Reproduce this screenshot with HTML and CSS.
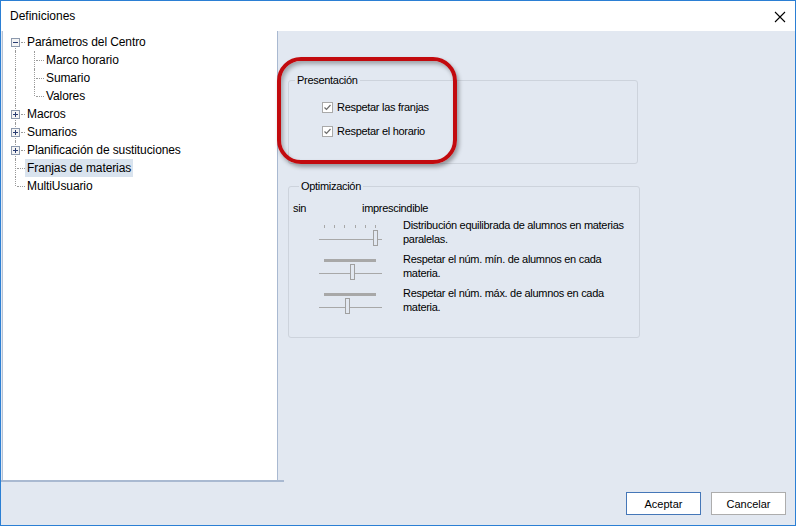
FILE: index.html
```html
<!DOCTYPE html>
<html lang="es">
<head>
    <meta charset="UTF-8">
    <title>Definiciones</title>
    <link rel="stylesheet" href="styles.css">
</head>
<body>
    <div class="window">
        <div class="titlebar">
            <span class="title">Definiciones</span>
            <svg class="close" width="12" height="12" viewBox="0 0 12 12">
                <path d="M1 1 L11 11 M11 1 L1 11" stroke="#000" stroke-width="1.1" fill="none"/>
            </svg>
        </div>

        <div class="main">
            <div class="tree-wrap">
                <ul class="tree">
                    <li class="row">
                        <span class="g first box"><svg width="9" height="9"><rect x=".5" y=".5" width="8" height="8" class="bx"/><path d="M2 4.5 H7" class="sign"/></svg></span>
                        <span class="label">Parámetros del Centro</span>
                    </li>
                    <li class="row">
                        <span class="g v"></span><span class="g2"></span>
                        <span class="label">Marco horario</span>
                    </li>
                    <li class="row">
                        <span class="g v"></span><span class="g2"></span>
                        <span class="label">Sumario</span>
                    </li>
                    <li class="row">
                        <span class="g v"></span><span class="g2 end"></span>
                        <span class="label">Valores</span>
                    </li>
                    <li class="row">
                        <span class="g box"><svg width="9" height="9"><rect x=".5" y=".5" width="8" height="8" class="bx"/><path d="M2 4.5 H7 M4.5 2 V7" class="sign"/></svg></span>
                        <span class="label">Macros</span>
                    </li>
                    <li class="row">
                        <span class="g box"><svg width="9" height="9"><rect x=".5" y=".5" width="8" height="8" class="bx"/><path d="M2 4.5 H7 M4.5 2 V7" class="sign"/></svg></span>
                        <span class="label">Sumarios</span>
                    </li>
                    <li class="row">
                        <span class="g box"><svg width="9" height="9"><rect x=".5" y=".5" width="8" height="8" class="bx"/><path d="M2 4.5 H7 M4.5 2 V7" class="sign"/></svg></span>
                        <span class="label">Planificación de sustituciones</span>
                    </li>
                    <li class="row">
                        <span class="g"></span>
                        <span class="label selected">Franjas de materias</span>
                    </li>
                    <li class="row">
                        <span class="g end"></span>
                        <span class="label">MultiUsuario</span>
                    </li>
                </ul>
            </div>

            <div class="panel">
                <fieldset class="group group-pres">
                    <legend>Presentación</legend>
                    <label class="check"><span class="cb"><svg width="9" height="9"><path d="M1.5 4.5 L3.5 6.5 L7.5 2" stroke="#6d6d6d" stroke-width="1.2" fill="none"/></svg></span>Respetar las franjas</label>
                    <label class="check"><span class="cb"><svg width="9" height="9"><path d="M1.5 4.5 L3.5 6.5 L7.5 2" stroke="#6d6d6d" stroke-width="1.2" fill="none"/></svg></span>Respetar el horario</label>
                </fieldset>

                <fieldset class="group group-opt">
                    <legend>Optimización</legend>
                    <div class="scale">
                        <span class="sin">sin</span>
                        <span>imprescindible</span>
                    </div>

                    <div class="opt-row">
                        <svg class="slider" width="70" height="30">
                            <path d="M7.5 7 V10 M17.5 7 V10 M27.5 7 V10 M38.5 7 V10 M48.5 7 V10 M58.5 7 V10" class="tick"/>
                            <path d="M2 21.5 H65" class="track"/>
                            <rect x="56.5" y="12.5" width="4" height="15" class="thumb"/>
                        </svg>
                        <p>Distribución equilibrada de alumnos en materias paralelas.</p>
                    </div>
                    <div class="opt-row">
                        <svg class="slider" width="70" height="30">
                            <rect x="7" y="7" width="52" height="3" class="bar"/>
                            <path d="M2 21.5 H65" class="track"/>
                            <rect x="33.5" y="12.5" width="4" height="15" class="thumb"/>
                        </svg>
                        <p>Respetar el núm. mín. de alumnos en cada materia.</p>
                    </div>
                    <div class="opt-row">
                        <svg class="slider" width="70" height="30">
                            <rect x="7" y="7" width="52" height="3" class="bar"/>
                            <path d="M2 21.5 H65" class="track"/>
                            <rect x="28.5" y="12.5" width="4" height="15" class="thumb"/>
                        </svg>
                        <p>Respetar el núm. máx. de alumnos en cada materia.</p>
                    </div>
                </fieldset>
            </div>

            <div class="highlight"></div>
        </div>

        <div class="buttons">
            <button class="btn default">Aceptar</button>
            <button class="btn">Cancelar</button>
        </div>
    </div>
</body>
</html>
```

FILE: styles.css
```css
body {
    margin: 0;
    padding: 0;
    font-family: "Liberation Sans", Arial, sans-serif;
}

.window {
    width: 796px;
    height: 526px;
    box-sizing: border-box;
    border: 1px solid #2b7fd4;
    background: #e2e8f1;
    display: flex;
    flex-direction: column;
}

.titlebar {
    height: 30px;
    flex: none;
    background: #fff;
    display: flex;
    align-items: center;
    justify-content: space-between;
    padding: 0 9px 0 9px;
    font-size: 12px;
    color: #000;
}

.close {
    margin-top: 1px;
}

.main {
    height: 451px;
    flex: none;
    display: flex;
    position: relative;
}

.tree-wrap {
    width: 282px;
    padding-left: 1px;
    border-bottom: 2px solid #a9b9d1;
    flex: none;
}

.tree {
    list-style: none;
    margin: 0;
    padding: 2px 0 0 0;
    width: 276px;
    height: 100%;
    box-sizing: border-box;
    background: #fff;
    border-left: 1px solid #b4c2d6;
    border-right: 1px solid #a9b9d1;
    font-size: 12px;
    letter-spacing: -0.1px;
}

.row {
    height: 18px;
    display: flex;
    align-items: center;
}

/* tree connector cells */
.g, .g2 {
    position: relative;
    height: 18px;
    flex: none;
}

.g { width: 22px; }
.g2 { width: 19px; }

.g::before, .g2::before {
    content: "";
    position: absolute;
    top: 0;
    bottom: 0;
    border-left: 1px dotted #9a9a9a;
}

.g::before { left: 12px; }
.g2::before { left: 9px; }

.g::after, .g2::after {
    content: "";
    position: absolute;
    top: 9px;
    right: 0;
    border-top: 1px dotted #9a9a9a;
}

.g::after { left: 14px; }
.g2::after { left: 11px; }

.g.v::after { display: none; }
.g.end::before, .g2.end::before { bottom: 9px; }
.g.first::before { top: 9px; }
.g.box::after { left: 18px; }

.g svg {
    position: absolute;
    left: 8px;
    top: 5px;
}

.bx {
    fill: #f4f4f4;
    stroke: #8c99ad;
}

.sign {
    stroke: #2a3d72;
    stroke-width: 1;
    fill: none;
}

.label {
    padding: 0 2px;
    line-height: 18px;
    white-space: nowrap;
    color: #000;
}

.label.selected {
    background: #d9e3ee;
}

/* right side */
.panel {
    flex: 1;
    padding: 43px 0 0 4px;
    font-size: 11px;
    letter-spacing: -0.3px;
    color: #000;
}

.group {
    width: 350px;
    box-sizing: border-box;
    margin: 0;
    padding: 0;
    border: 1px solid #cdd3dc;
    border-radius: 3px;
}

.group legend {
    margin-left: 6px;
    padding: 0 2px;
    line-height: 13px;
}

.group-pres {
    height: 90px;
    padding-top: 12px;
}

.check {
    display: flex;
    align-items: center;
    height: 16px;
    margin: 0 0 8px 33px;
}

.cb {
    width: 11px;
    height: 11px;
    box-sizing: border-box;
    border: 1px solid #a9a9a9;
    background: #fff;
    margin-right: 4px;
    display: flex;
    align-items: center;
    justify-content: center;
}

.group-opt {
    margin-top: 16px;
    height: 158px;
    padding: 8px 0 0 4px;
}

.scale {
    display: flex;
    line-height: 14px;
    margin-bottom: 3px;
}

.sin {
    width: 69px;
}

.opt-row {
    display: flex;
    height: 34px;
}

.slider {
    margin-left: 24px;
    flex: none;
}

.tick, .track {
    stroke: #a8a8a8;
    stroke-width: 1;
    fill: none;
}

.bar {
    fill: #a8a8a8;
}

.thumb {
    fill: #e2e8f1;
    stroke: #a0a0a0;
}

.opt-row p {
    margin: 0 0 0 16px;
    width: 236px;
    line-height: 14px;
}

/* red marker drawn over the screenshot */
.highlight {
    position: absolute;
    left: 276px;
    top: 26px;
    width: 180px;
    height: 107px;
    box-sizing: border-box;
    border: 4px solid #c20a0e;
    border-radius: 24px;
    box-shadow: 2px 3px 4px rgba(0, 0, 0, .35), inset 2px 3px 4px rgba(0, 0, 0, .3);
}

.buttons {
    flex: 1;
    display: flex;
    justify-content: flex-end;
    align-items: flex-start;
    gap: 10px;
    padding: 10px 9px 0 0;
}

.btn {
    width: 75px;
    height: 23px;
    background: #fff;
    border: 1px solid #adadad;
    font-family: "Liberation Sans", Arial, sans-serif;
    font-size: 11px;
    color: #000;
    padding: 0;
}

.btn.default {
    border: 1px solid #4577b8;
}
```
